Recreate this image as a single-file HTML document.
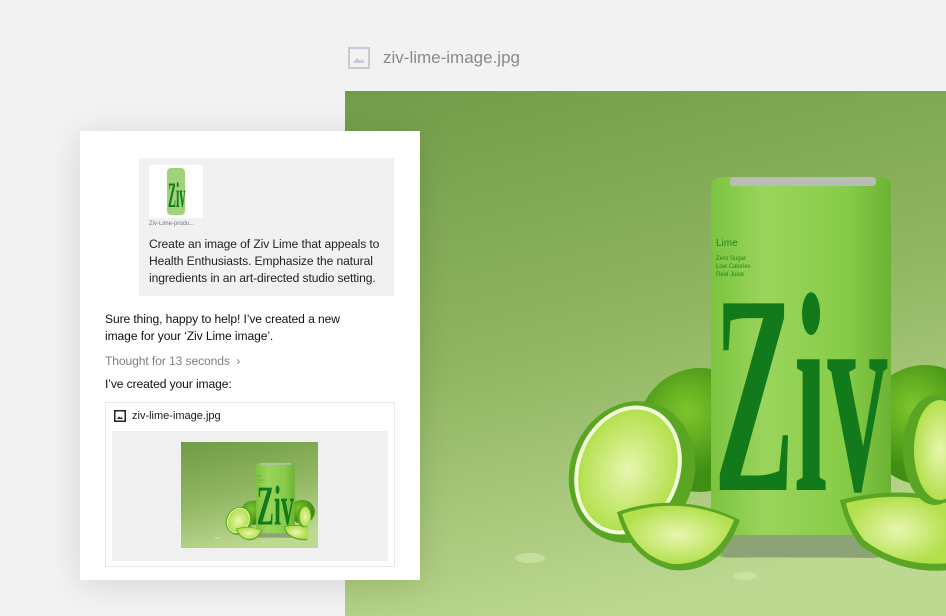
<!DOCTYPE html>
<html><head><meta charset="utf-8"><style>
*{margin:0;padding:0;box-sizing:border-box}
body{width:946px;height:616px;background:#f2f2f2;position:relative;overflow:hidden;font-family:"Liberation Sans",sans-serif;color:#1a1a1a}
.hdr{position:absolute;left:348px;top:47px;display:flex;align-items:center;gap:13px;color:#8a8a8a;font-size:17px}
.big{position:absolute;left:345px;top:91px;width:601px;height:525px}
.card{position:absolute;left:80px;top:131px;width:340px;height:449px;background:#fff;box-shadow:0 4px 30px rgba(0,0,0,.12)}
.bub{position:absolute;left:59px;top:27px;width:255px;height:138px;background:#f1f1f1}
.th{position:absolute;left:10px;top:7px;width:54px;height:53px;background:#fff;overflow:hidden}
.tn{position:absolute;left:10px;top:63px;font-size:6px;color:#777}
.bt{position:absolute;left:10px;top:78px;width:242px;font-size:12.1px;line-height:17px;color:#222;letter-spacing:-0.1px}
.p{position:absolute;left:25px;font-size:12.1px;line-height:16.5px;color:#111;letter-spacing:-0.1px}
.att{position:absolute;left:25px;top:271px;width:290px;height:165px;border:1px solid #e8e8e8}
.att .nm{position:absolute;left:8px;top:7px;font-size:11px;display:flex;align-items:center;gap:6px}
.att .bx{position:absolute;left:6px;top:28px;width:276px;height:130px;background:#f0f0f0}
.att svg.s{position:absolute;left:69px;top:11px;width:137px;height:106px}
</style></head><body>
<svg width="0" height="0" style="position:absolute">
<defs>
<linearGradient id="bg" x1="0" y1="0" x2="0.3" y2="1"><stop offset="0" stop-color="#6c9744"/><stop offset=".55" stop-color="#8fb560"/><stop offset="1" stop-color="#bcd891"/></linearGradient>
<linearGradient id="can" x1="0" x2="1"><stop offset="0" stop-color="#7bc43f"/><stop offset=".3" stop-color="#9ad45c"/><stop offset=".75" stop-color="#86cc48"/><stop offset="1" stop-color="#6bb333"/></linearGradient>
<radialGradient id="lime" cx=".4" cy=".35"><stop offset="0" stop-color="#7fc62c"/><stop offset="1" stop-color="#3f8f14"/></radialGradient>
<radialGradient id="flesh"><stop offset="0" stop-color="#e8f6b0"/><stop offset="1" stop-color="#b3e04d"/></radialGradient>
<g id="scene">
<rect x="300" y="40" width="720" height="600" fill="url(#bg)"/>
<circle cx="700" cy="430" r="62" fill="url(#lime)"/>
<circle cx="925" cy="425" r="60" fill="url(#lime)"/>
<ellipse cx="632" cy="472" rx="62" ry="72" fill="#5aa624" transform="rotate(20 632 472)"/>
<ellipse cx="628" cy="470" rx="52" ry="66" fill="#f2fbd8" transform="rotate(20 628 470)"/>
<ellipse cx="628" cy="470" rx="48" ry="62" fill="url(#flesh)" transform="rotate(20 628 470)"/>
<path d="M711 186 Q711 177 725 177 L877 177 Q891 177 891 186 L891 545 Q891 558 870 558 L732 558 Q711 558 711 545Z" fill="url(#can)"/>
<rect x="730" y="177" width="146" height="9" rx="3" fill="#b8bdb5"/>
<rect x="720" y="535" width="160" height="22" rx="6" fill="#8ca378"/>
<text x="716" y="246" font-family="Liberation Sans" font-size="10" fill="#1d8a22">Lime</text>
<text x="716" y="260" font-family="Liberation Sans" font-size="6" fill="#1d8a22">Zero Sugar</text>
<text x="716" y="268" font-family="Liberation Sans" font-size="6" fill="#1d8a22">Low Calories</text>
<text x="716" y="276" font-family="Liberation Sans" font-size="6" fill="#1d8a22">Real Juice</text>
<text x="0" y="0" font-family="Liberation Serif" font-weight="bold" font-size="150" fill="#127a1a" transform="translate(714 490) scale(0.8 1.9)">Ziv</text>
<path d="M617 512 Q680 490 740 520 Q720 575 672 570 Q630 560 617 512Z" fill="#5aa624"/>
<path d="M622 514 Q680 495 734 520 Q716 566 672 564 Q635 556 622 514Z" fill="url(#flesh)"/>
<path d="M840 500 Q900 485 950 500 L950 570 Q900 575 860 545 Q845 525 840 500Z" fill="#5aa624"/>
<path d="M846 503 Q900 490 950 504 L950 563 Q900 568 864 540 Q850 522 846 503Z" fill="url(#flesh)"/>
<ellipse cx="935" cy="450" rx="32" ry="55" fill="#5aa624"/>
<ellipse cx="940" cy="450" rx="26" ry="50" fill="url(#flesh)"/>
<ellipse cx="530" cy="558" rx="15" ry="5" fill="#cfe6a8" opacity=".7"/>
<ellipse cx="745" cy="576" rx="12" ry="4" fill="#cfe6a8" opacity=".7"/>
</g>
</defs></svg>
<div class="hdr"><svg width="22" height="22" viewBox="0 0 22 22"><rect x="1" y="1" width="20" height="20" fill="none" stroke="#c9c9d3" stroke-width="2"/><path d="M5 16 L9 11 L12 14 L14 12 L17 16Z" fill="#c9c9d3"/></svg><span>ziv-lime-image.jpg</span></div>
<svg class="big" viewBox="345 91 601 525" preserveAspectRatio="none"><use href="#scene"/></svg>
<div class="card">
 <div class="bub">
  <div class="th"><svg width="54" height="53" viewBox="0 0 54 53"><rect x="18" y="3" width="18" height="47" rx="4" fill="#9fd27a"/><text x="0" y="0" font-family="Liberation Serif" font-weight="bold" font-size="20" fill="#127a1a" transform="translate(19 42) scale(.6 1.8)">Ziv</text></svg></div>
  <div class="tn">Ziv-Lime-produ...</div>
  <div class="bt">Create an image of Ziv Lime that appeals to Health Enthusiasts. Emphasize the natural ingredients in an art-directed studio setting.</div>
 </div>
 <div class="p" style="top:180px;width:250px">Sure thing, happy to help! I’ve created a new image for your ‘Ziv Lime image’.</div>
 <div class="p" style="top:222px;color:#808080">Thought for 13 seconds &nbsp;›</div>
 <div class="p" style="top:245px">I’ve created your image:</div>
 <div class="att">
  <div class="nm"><svg width="12" height="12" viewBox="0 0 12 12"><rect x=".75" y=".75" width="10.5" height="10.5" fill="none" stroke="#222" stroke-width="1.5"/><path d="M3 9 L5 6.5 L6.5 8 L7.5 7 L9 9Z" fill="#222"/></svg>ziv-lime-image.jpg</div>
  <div class="bx"><svg class="s" viewBox="360 70 640 540" preserveAspectRatio="none"><use href="#scene"/></svg></div>
 </div>
</div>
</body></html>
